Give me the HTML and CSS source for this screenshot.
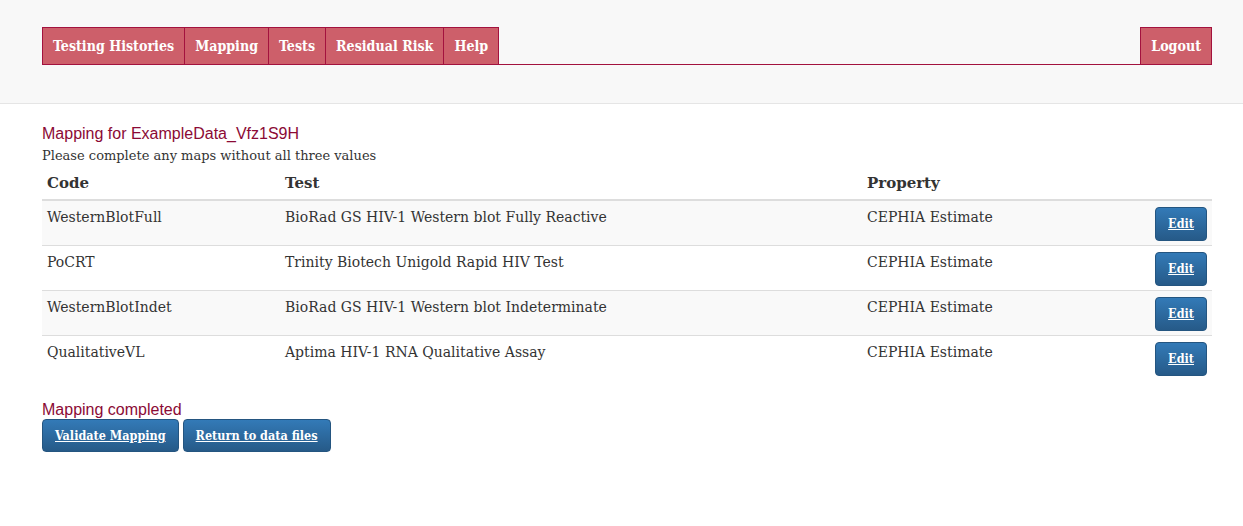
FILE: index.html
```html
<!DOCTYPE html>
<html>
<head>
<meta charset="utf-8">
<link rel="stylesheet" href="styles.css">
</head>
<body>
<header class="topbar">
  <nav class="nav">
    <ul class="tabs">
      <li class="tab">Testing Histories</li>
      <li class="tab">Mapping</li>
      <li class="tab">Tests</li>
      <li class="tab">Residual Risk</li>
      <li class="tab">Help</li>
    </ul>
    <ul class="tabs right">
      <li class="tab">Logout</li>
    </ul>
  </nav>
</header>
<main class="container">
  <h2 class="title">Mapping for ExampleData_Vfz1S9H</h2>
  <p class="note">Please complete any maps without all three values</p>
  <table class="maps">
    <thead>
      <tr><th class="c-code">Code</th><th class="c-test">Test</th><th class="c-prop">Property</th><th class="c-act"></th></tr>
    </thead>
    <tbody>
      <tr><td>WesternBlotFull</td><td>BioRad GS HIV-1 Western blot Fully Reactive</td><td>CEPHIA Estimate</td><td class="act"><a class="btn small">Edit</a></td></tr>
      <tr><td>PoCRT</td><td>Trinity Biotech Unigold Rapid HIV Test</td><td>CEPHIA Estimate</td><td class="act"><a class="btn small">Edit</a></td></tr>
      <tr><td>WesternBlotIndet</td><td>BioRad GS HIV-1 Western blot Indeterminate</td><td>CEPHIA Estimate</td><td class="act"><a class="btn small">Edit</a></td></tr>
      <tr><td>QualitativeVL</td><td>Aptima HIV-1 RNA Qualitative Assay</td><td>CEPHIA Estimate</td><td class="act"><a class="btn small">Edit</a></td></tr>
    </tbody>
  </table>
  <h2 class="title done">Mapping completed</h2>
  <div class="actions">
    <a class="btn">Validate Mapping</a>
    <a class="btn">Return to data files</a>
  </div>
</main>
</body>
</html>
```
FILE: styles.css
```css
html, body {
  margin: 0;
  padding: 0;
  background: #fff;
}
body {
  font-family: "DejaVu Serif", Georgia, serif;
  font-size: 14px;
  color: #333;
}
.topbar {
  background: #f8f8f8;
  height: 104px;
  box-sizing: border-box;
  border-bottom: 1px solid #e5e5e5;
  padding: 27px 31px 0 42px;
}
.nav {
  display: flex;
  justify-content: space-between;
  border-bottom: 1px solid #a3123e;
}
.tabs {
  display: flex;
  list-style: none;
  margin: 0 0 -1px 0;
  padding: 0;
}
.tab {
  background: #cd5f6a;
  color: #fff;
  font-weight: bold;
  font-size: 14.1px;
  font-stretch: condensed;
  height: 36px;
  line-height: 36px;
  padding: 0 10px;
  border: 1px solid #a3123e;
  margin-left: -1px;
}
.tabs .tab:first-child { margin-left: 0; }
.container {
  width: 1170px;
  margin: 0 0 0 42px;
  padding-top: 20px;
}
.title {
  font-family: "Liberation Sans", Arial, sans-serif;
  font-weight: normal;
  font-size: 16px;
  color: #8b0a35;
  margin: 0 0 2px 0;
  line-height: 20px;
}
.note {
  margin: 0 0 2px 0;
  font-size: 13px;
  line-height: 20px;
}
.maps {
  width: 100%;
  border-collapse: collapse;
  margin-bottom: 20px;
}
.maps th {
  text-align: left;
  font-weight: bold;
  font-size: 15px;
  padding: 7px 5px 8px;
  line-height: 16px;
  border-bottom: 2px solid #ddd;
}
.c-code { width: 228px; }
.c-test { width: 572px; }
.maps td {
  padding: 8px 5px;
  vertical-align: top;
  height: 28px;
  line-height: 16px;
  border-top: 1px solid #ddd;
}
.maps tbody tr:first-child td { border-top: 0; }
.maps tbody tr:nth-child(odd) td { background: #f9f9f9; }
.maps td.act {
  text-align: right;
  padding: 6px 5px 4px;
}
.btn {
  display: inline-block;
  box-sizing: border-box;
  height: 33px;
  line-height: 31px;
  padding: 0 12px;
  color: #fff;
  font-weight: bold;
  font-size: 12.5px;
  font-stretch: condensed;
  text-decoration: underline;
  border: 1px solid #245580;
  border-radius: 4px;
  background: linear-gradient(to bottom, #337ab7 0%, #265a88 100%);
}
.btn.small {
  height: 34px;
  line-height: 32px;
  padding: 0 12px;
}
.done { margin: 0 0 -1px 0; }
.actions {
  display: flex;
  gap: 4px;
}
```
